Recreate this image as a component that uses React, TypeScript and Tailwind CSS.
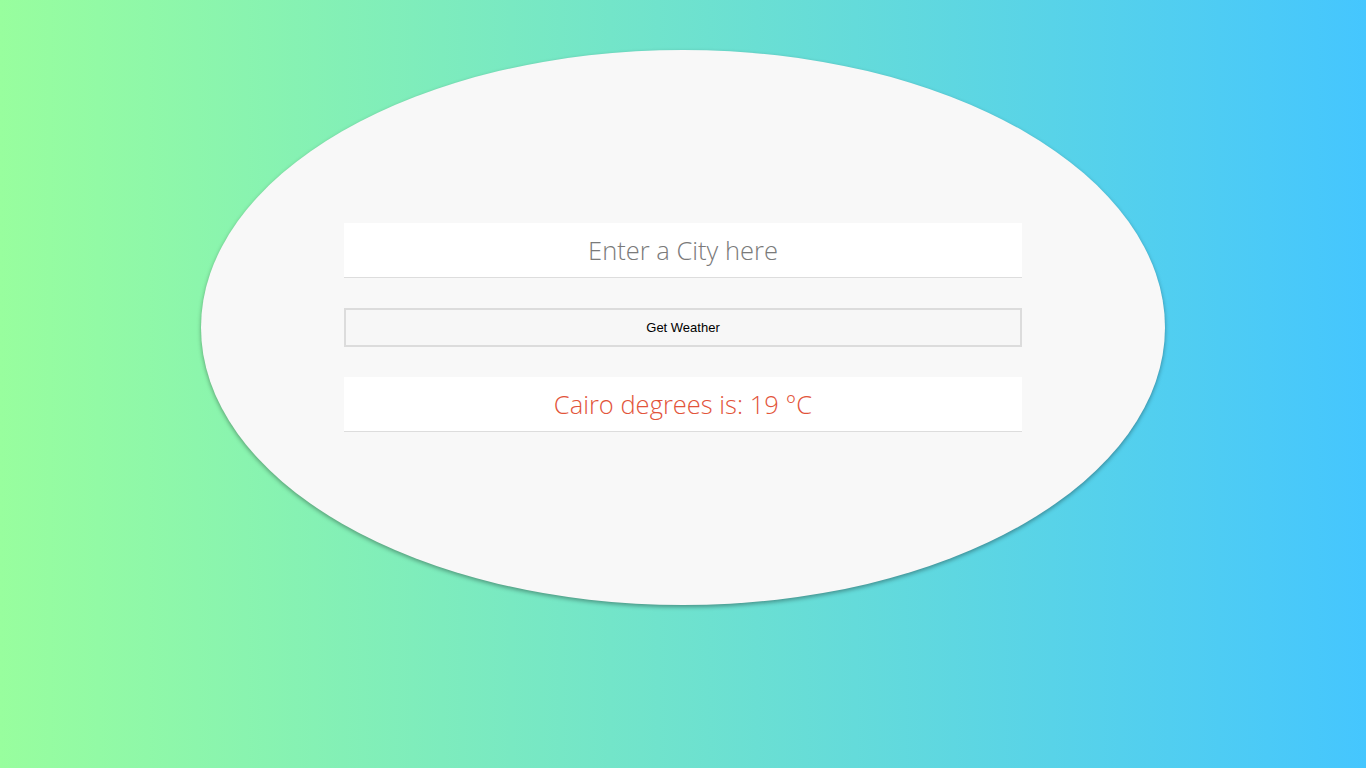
export default function App() {
  return (
    <div className="w-[1366px] h-[768px] bg-[linear-gradient(to_right,#98fe9e,#45c6fe)] pt-[50px] overflow-hidden">
      <div className="mx-auto w-[964px] h-[555px] rounded-[50%] bg-[#f8f8f8] shadow-[0_2px_4px_rgba(0,0,0,0.35)] flex flex-col items-center justify-center">
        <div className="w-[678px] flex flex-col">
          <input
            placeholder="Enter a City here"
            className="h-[55px] w-full bg-white border-b border-[#dddddd] text-center text-[25.5px] font-light text-[#777] placeholder:text-[#7a7a7a] outline-none font-['Open_Sans',sans-serif]"
          />
          <button className="mt-[30px] h-[39px] w-full border-2 border-[#dcdcdc] bg-[#f7f7f7] text-[13px] text-black font-['Liberation_Sans',Arial,sans-serif]">
            Get Weather
          </button>
          <div className="mt-[30px] h-[55px] w-full bg-white border-b border-[#dddddd] flex items-center justify-center text-[25.5px] font-light text-[#e2543a] font-['Open_Sans',sans-serif]">
            Cairo degrees is: 19 °C
          </div>
        </div>
      </div>
    </div>
  );
}
